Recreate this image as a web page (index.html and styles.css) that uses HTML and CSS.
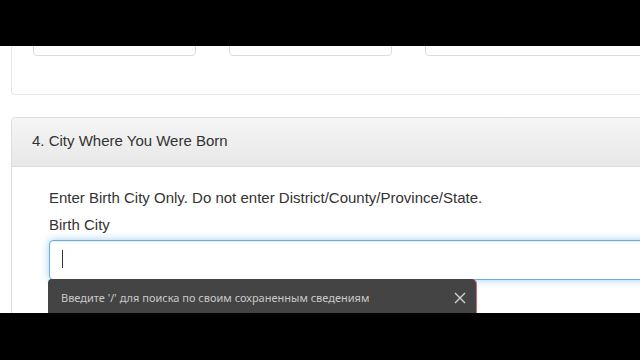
FILE: index.html
```html
<!DOCTYPE html>
<html lang="en">
<head>
    <meta charset="UTF-8">
    <meta name="viewport" content="width=device-width, initial-scale=1.0">
    <title>City Where You Were Born</title>
    <link rel="stylesheet" href="styles.css">
</head>
<body>
    <div class="screen">
        <div class="bar"></div>

        <div class="viewport">
            <div class="page">
                <section class="panel panel-prev">
                    <div class="fields">
                        <div class="field-box"></div>
                        <div class="field-box"></div>
                        <div class="field-box wide"></div>
                    </div>
                </section>

                <section class="panel">
                    <div class="panel-heading">4. City Where You Were Born</div>
                    <div class="panel-body">
                        <p class="hint">Enter Birth City Only. Do not enter District/County/Province/State.</p>
                        <label class="label">Birth City</label>
                        <div class="input-wrap">
                            <div class="text-input"><span class="caret"></span></div>
                            <div class="autofill-tip">
                                <span class="tip-text">Введите '/' для поиска по своим сохраненным сведениям</span>
                                <svg class="tip-close" width="12" height="12" viewBox="0 0 12 12">
                                    <path d="M1 1 L11 11 M11 1 L1 11" stroke="#d2d2d2" stroke-width="1.4" fill="none"/>
                                </svg>
                            </div>
                        </div>
                    </div>
                </section>
            </div>
        </div>

        <div class="bar bar-bottom"></div>
    </div>
</body>
</html>
```

FILE: styles.css
```css
body {
    margin: 0;
    background: #000;
    font-family: "Liberation Sans", Arial, sans-serif;
}

.screen {
    width: 640px;
    height: 360px;
    display: flex;
    flex-direction: column;
    overflow: hidden;
}

.bar {
    height: 46px;
    flex-shrink: 0;
    background: #000;
}

.bar-bottom {
    height: 47px;
}

.viewport {
    height: 267px;
    flex-shrink: 0;
    background: #fff;
    overflow: hidden;
}

.page {
    width: 720px;
    padding-left: 11px;
}

.panel {
    border: 1px solid #dedede;
    border-radius: 4px;
    background: #fff;
}

.panel-prev {
    margin-top: -21px;
    margin-bottom: 22px;
    border-color: #e6e6e6;
    border-top: none;
    border-radius: 0 0 4px 4px;
    padding: 0 0 38px 21px;
}

.fields {
    display: flex;
    gap: 33px;
}

.field-box {
    width: 163px;
    height: 31px;
    box-sizing: border-box;
    border: 1px solid #dcdcdc;
    border-radius: 4px;
}

.field-box.wide {
    flex: 1;
}

.panel-heading {
    padding: 11px 20px 13px;
    font-size: 15px;
    line-height: 24px;
    color: #333;
    background: linear-gradient(#f5f5f5, #e8e8e8);
    border-bottom: 1px solid #dcdcdc;
    border-radius: 4px 4px 0 0;
}

.panel-body {
    padding: 20px 0 40px 37px;
    color: #333;
    font-size: 15px;
    line-height: 22px;
}

.hint {
    margin: 0 0 5px;
}

.label {
    display: block;
    margin-bottom: 4px;
}

.input-wrap {
    position: relative;
}

.text-input {
    height: 38px;
    padding-left: 12px;
    border: 1px solid #66afe9;
    border-radius: 4px 0 0 4px;
    box-shadow: inset 0 1px 1px rgba(0, 0, 0, 0.075), 0 0 8px rgba(102, 175, 233, 0.6);
}

.caret {
    display: block;
    width: 1px;
    height: 18px;
    margin-top: 9px;
    background: #333;
}

.autofill-tip {
    position: absolute;
    left: -1px;
    top: 39px;
    width: 428px;
    height: 44px;
    box-sizing: border-box;
    padding: 11px 10px 0 13px;
    display: flex;
    align-items: flex-start;
    justify-content: space-between;
    background: #444;
    border-radius: 4px 5px 0 0;
    box-shadow: 1px 0 0 rgba(214, 64, 64, 0.8);
    font-family: "Noto Sans", "Open Sans", sans-serif;
    font-size: 11px;
    line-height: 16px;
    color: #c9c9c9;
}

.tip-close {
    margin-top: 2px;
}
```
